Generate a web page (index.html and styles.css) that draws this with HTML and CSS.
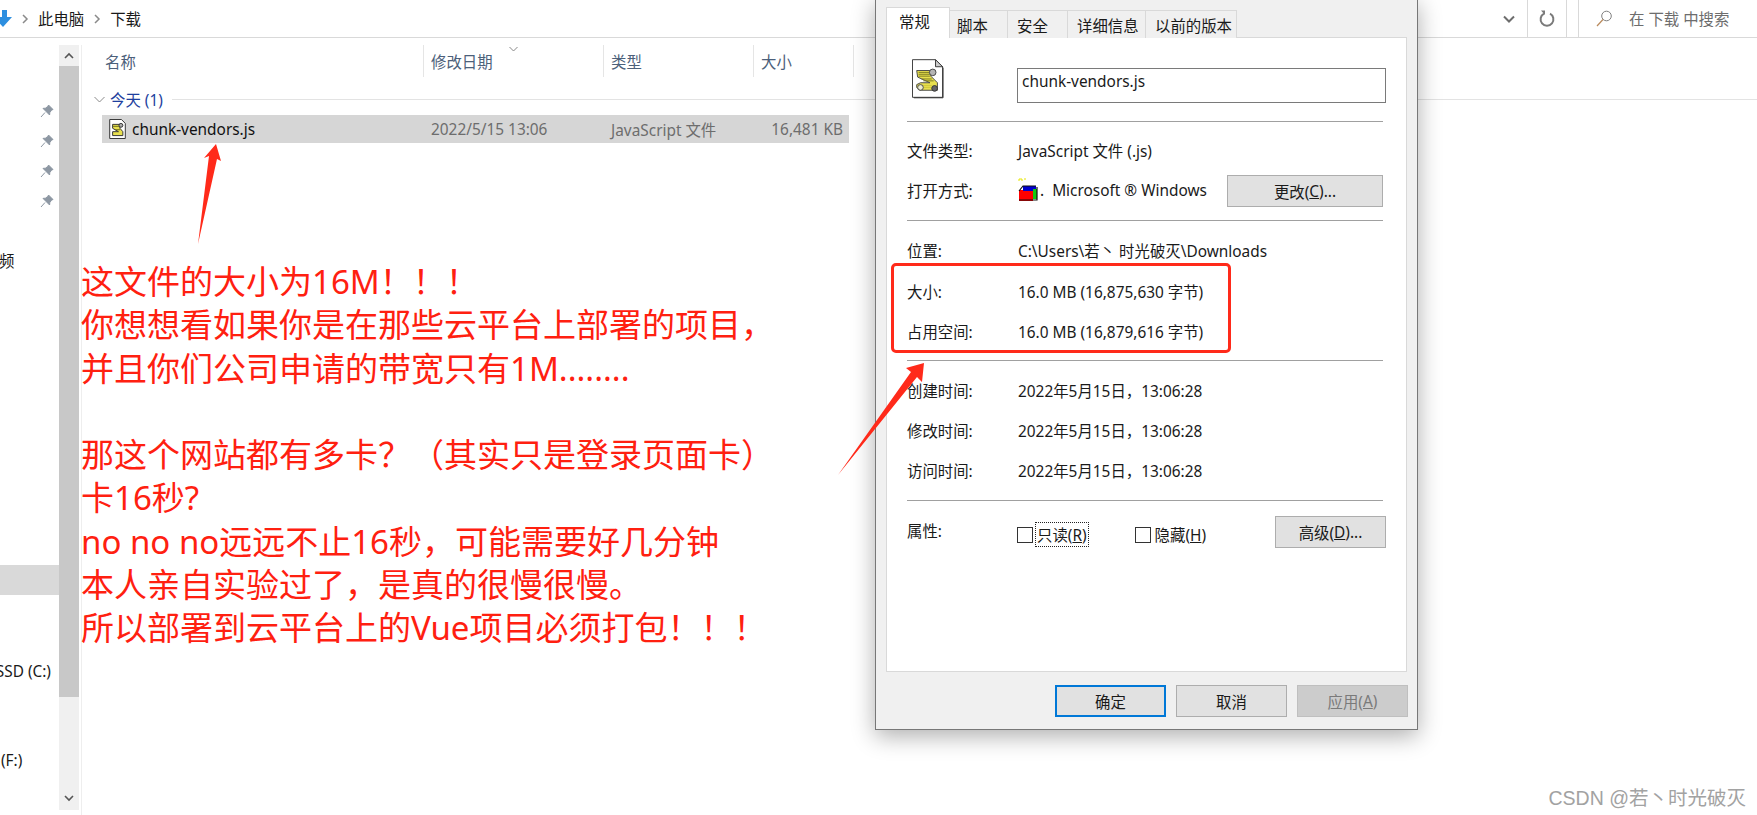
FILE: index.html
```html
<!DOCTYPE html>
<html lang="zh">
<head>
  <meta charset="UTF-8">
  <title>chunk-vendors.js 属性</title>
  <link rel="stylesheet" href="styles.css">
</head>
<body>
<div class="shot">

  <div class="explorer">
    <div class="addressbar">
      <div class="crumbs">
        <svg class="down-icon" width="12" height="20" viewBox="0 0 12 20"><path d="M-6 8 H2 V1 H7 V8 H12 L3 18 Z" fill="#2d8fe0"/></svg>
        <svg class="crumb-sep" width="8" height="10" viewBox="0 0 8 10"><path d="M2 1 L6 5 L2 9" fill="none" stroke="#8a8a8a" stroke-width="1.5"/></svg>
        <span>此电脑</span>
        <svg class="crumb-sep" width="8" height="10" viewBox="0 0 8 10"><path d="M2 1 L6 5 L2 9" fill="none" stroke="#8a8a8a" stroke-width="1.5"/></svg>
        <span>下载</span>
      </div>
      <div class="addr-tools">
        <svg class="addr-chevron" width="12" height="8" viewBox="0 0 12 8"><path d="M1 1.5 L6 6.5 L11 1.5" fill="none" stroke="#6d6d6d" stroke-width="2"/></svg>
        <div class="addr-refresh">
          <svg width="16" height="17" viewBox="0 0 16 17"><path d="M5 3.6 A6.4 6.4 0 1 0 11 3.6" fill="none" stroke="#7a7a7a" stroke-width="2"/><path d="M4 .5 L8 .5 L8 5 Z" fill="#7a7a7a" transform="translate(-2 0)"/></svg>
        </div>
      </div>
      <div class="searchbox">
        <svg width="17" height="17" viewBox="0 0 17 17"><circle cx="10.5" cy="6" r="4.8" fill="none" stroke="#7f7f7f"/><path d="M7 9.5 L1 16" stroke="#b98a5c" stroke-width="1.2"/></svg>
        <span>在 下载 中搜索</span>
      </div>
    </div>

    <div class="main">
      <div class="sidebar">
        <ul class="nav">
          <li class="nav-pin"><svg width="14" height="14" viewBox="0 0 14 14"><path d="M8.5 1 L13 5.5 L11.6 6 L9.8 8.6 L9.6 11 L3 4.4 L5.4 4.2 L8 2.4 Z M5 8.5 L1 13" fill="#8d97a3" stroke="#8d97a3"/></svg></li>
          <li class="nav-pin"><svg width="14" height="14" viewBox="0 0 14 14"><path d="M8.5 1 L13 5.5 L11.6 6 L9.8 8.6 L9.6 11 L3 4.4 L5.4 4.2 L8 2.4 Z M5 8.5 L1 13" fill="#8d97a3" stroke="#8d97a3"/></svg></li>
          <li class="nav-pin"><svg width="14" height="14" viewBox="0 0 14 14"><path d="M8.5 1 L13 5.5 L11.6 6 L9.8 8.6 L9.6 11 L3 4.4 L5.4 4.2 L8 2.4 Z M5 8.5 L1 13" fill="#8d97a3" stroke="#8d97a3"/></svg></li>
          <li class="nav-pin"><svg width="14" height="14" viewBox="0 0 14 14"><path d="M8.5 1 L13 5.5 L11.6 6 L9.8 8.6 L9.6 11 L3 4.4 L5.4 4.2 L8 2.4 Z M5 8.5 L1 13" fill="#8d97a3" stroke="#8d97a3"/></svg></li>
          <li class="nav-video"><span>频</span></li>
          <li class="nav-current"></li>
          <li class="nav-ssd"><span>SSD (C:)</span></li>
          <li class="nav-f"><span>(F:)</span></li>
        </ul>
      </div>
      <div class="scrollbar">
        <div class="scroll-btn"><svg width="10" height="7" viewBox="0 0 10 7"><path d="M1 6 L5 2 L9 6" fill="none" stroke="#555" stroke-width="1.6"/></svg></div>
        <div class="scroll-thumb"></div>
        <div class="scroll-rest"><svg width="10" height="7" viewBox="0 0 10 7"><path d="M1 1 L5 5 L9 1" fill="none" stroke="#555" stroke-width="1.6"/></svg></div>
      </div>
      <div class="files">
        <div class="file-head">
          <div class="col col-name">名称</div>
          <div class="col col-date">修改日期
            <svg class="sort-mark" width="9" height="6" viewBox="0 0 9 6"><path d="M.5 1 L4.5 5 L8.5 1" fill="none" stroke="#888"/></svg>
          </div>
          <div class="col col-type">类型</div>
          <div class="col col-size">大小</div>
        </div>
        <div class="group">
          <svg width="11" height="7" viewBox="0 0 11 7"><path d="M.5 1 L5.5 6 L10.5 1" fill="none" stroke="#8a8a8a"/></svg>
          <span>今天 (1)</span>
          <div class="group-line"></div>
        </div>
        <div class="file-row">
          <svg class="js-small" width="17" height="20" viewBox="0 0 34 41">
            <path d="M1 1 H25 L33 9 V40 H1 Z" fill="#fff" stroke="#333" stroke-width="2"/>
            <path d="M7 11 H22 V19 L28 26 V34 H7 V26 H19 L7 19 Z" fill="#e8e04e" stroke="#333" stroke-width="2"/>
            <path d="M8 15 H20 M12 22 H22" stroke="#6b6a1c" stroke-width="2"/>
            <circle cx="24" cy="13" r="4" fill="#aaa" stroke="#333" stroke-width="2"/>
          </svg>
          <span class="file-name">chunk-vendors.js</span>
          <span class="file-date">2022/5/15 13:06</span>
          <span class="file-type">JavaScript 文件</span>
          <span class="file-size">16,481 KB</span>
        </div>
      </div>
    </div>
  </div>

  <div class="dialog">
    <div class="tabs">
      <div class="tab tab-active">常规</div>
      <div class="tab tab-script">脚本</div>
      <div class="tab tab-safe">安全</div>
      <div class="tab tab-detail">详细信息</div>
      <div class="tab tab-prev">以前的版本</div>
    </div>
    <div class="panel">
      <div class="name-row">
        <svg class="js-big" width="34" height="41" viewBox="0 0 34 41">
          <path d="M.5 .5 H25 L32.5 8 V40.5 H.5 Z" fill="#fff" stroke="#333"/>
          <path d="M25 .5 V8 H32.5 Z" fill="#ccc" stroke="#333"/>
          <path d="M33 9 V41 H2" fill="none" stroke="#333" stroke-width="1"/>
          <path d="M5 12 H20 V18 L27 25 V33 H8 L5 30 V27 L9 25 H19 L6 19 Z" fill="#e8e04e" stroke="#444"/>
          <path d="M7 14 H19 M7 16 H19 M7 18 H19 M10 21 H21 M12 23 H23" stroke="#77761f"/>
          <path d="M10 28 H21 M10 30 H21" stroke="#cfc83a"/>
          <circle cx="22" cy="14" r="3.5" fill="#b5b5b5" stroke="#444"/>
          <circle cx="9" cy="30" r="3" fill="#eeeed0" stroke="#444"/>
          <circle cx="24" cy="31" r="3" fill="#666" stroke="#333"/>
        </svg>
        <div class="name-input">chunk-vendors.js</div>
      </div>
      <hr class="rule rule-name">
      <div class="info info-type">
        <span class="label">文件类型:</span><span>JavaScript 文件 (.js)</span>
      </div>
      <div class="info info-open">
        <span class="label">打开方式:</span>
        <svg class="app-icon" width="21" height="23" viewBox="0 0 21 23">
          <path d="M1 3 V1 H4 V3 M6 1 H8" stroke="#e6e600" fill="none"/>
          <rect x="1" y="12" width="14" height="11" fill="#f00"/>
          <rect x="5" y="8" width="13" height="5" fill="#00c"/>
          <rect x="15" y="11" width="4" height="10" fill="#1c1"/>
          <path d="M1 13 L5 8 H18 M19 9 V22 H1" fill="none" stroke="#111" stroke-width="1.2"/>
        </svg>
        <span class="app-dot">.</span>
        <span class="app-name">Microsoft ® Windows</span>
        <div class="btn btn-change">更改(<u>C</u>)...</div>
      </div>
      <hr class="rule rule-open">
      <div class="info"><span class="label">位置:</span><span>C:\Users\若丶 时光破灭\Downloads</span></div>
      <div class="info info-gap"><span class="label">大小:</span><span>16.0 MB (16,875,630 字节)</span></div>
      <div class="info"><span class="label">占用空间:</span><span>16.0 MB (16,879,616 字节)</span></div>
      <hr class="rule rule-size">
      <div class="info"><span class="label">创建时间:</span><span>2022年5月15日，13:06:28</span></div>
      <div class="info"><span class="label">修改时间:</span><span>2022年5月15日，13:06:28</span></div>
      <div class="info"><span class="label">访问时间:</span><span>2022年5月15日，13:06:28</span></div>
      <hr class="rule rule-time">
      <div class="attrs">
        <span class="label attr-label">属性:</span>
        <span class="check"></span><span class="check-text focused">只读(<u>R</u>)</span>
        <span class="check check-2"></span><span class="check-text">隐藏(<u>H</u>)</span>
        <div class="btn btn-adv">高级(<u>D</u>)...</div>
      </div>
    </div>
    <div class="dialog-foot">
      <div class="btn btn-foot btn-ok">确定</div>
      <div class="btn btn-foot">取消</div>
      <div class="btn btn-foot btn-off">应用(<u>A</u>)</div>
    </div>
  </div>

  <div class="redbox"></div>
  <svg class="arrows" width="1757" height="815" viewBox="0 0 1757 815">
    <path d="M198 244 L209 156 L204 158 L216 144 L221 161 L217 159 Z" fill="#ff2a1a"/>
    <path d="M838 475 L911 372 L906 368 L924 363 L922 382 L917 377 Z" fill="#ff2a1a"/>
  </svg>

  <div class="note">
    <div>这文件的大小为16M！！！</div>
    <div>你想想看如果你是在那些云平台上部署的项目，</div>
    <div>并且你们公司申请的带宽只有1M........</div>
    <div>&nbsp;</div>
    <div>那这个网站都有多卡？（其实只是登录页面卡）</div>
    <div>卡16秒?</div>
    <div>no no no远远不止16秒，可能需要好几分钟</div>
    <div>本人亲自实验过了，是真的很慢很慢。</div>
    <div>所以部署到云平台上的Vue项目必须打包！！！</div>
  </div>

  <div class="watermark">CSDN @若丶时光破灭</div>
</div>
</body>
</html>
```

FILE: styles.css
```css
* {
  padding: 0;
  margin: 0;
  box-sizing: border-box;
  list-style: none;
}

body {
  background: #fff;
  font-family: "Noto Sans", "Noto Sans CJK SC", sans-serif;
  font-size: 15.4px;
  color: #1a1a1a;
  overflow: hidden;
}

.shot {
  width: 1757px;
  height: 815px;
  position: relative;
  overflow: hidden;
}

/* explorer window */
.addressbar {
  height: 38px;
  border-bottom: 1px solid #d9d9d9;
  display: flex;
  align-items: center;
}

.crumbs {
  display: flex;
  align-items: center;
  flex: 1;
}

.down-icon {
  margin-right: 9px;
}

.crumb-sep {
  margin-right: 9px;
}

.crumbs span {
  margin-right: 9px;
}

.addr-tools {
  width: 66px;
  height: 37px;
  display: flex;
  align-items: center;
  border-right: 1px solid #d9d9d9;
  margin-right: 11px;
}

.addr-chevron {
  margin-left: 2px;
  margin-right: 12px;
}

.addr-refresh {
  height: 37px;
  flex: 1;
  border-left: 1px solid #d9d9d9;
  display: flex;
  align-items: center;
  justify-content: center;
}

.searchbox {
  width: 179px;
  height: 37px;
  border-left: 1px solid #d9d9d9;
  display: flex;
  align-items: center;
  padding-left: 17px;
  gap: 16px;
  color: #6d6d6d;
  white-space: nowrap;
  overflow: hidden;
}

.main {
  display: flex;
  height: 777px;
}

.sidebar {
  width: 59px;
}

.nav li {
  height: 30px;
  display: flex;
  align-items: center;
  justify-content: flex-end;
  white-space: nowrap;
}

.nav-pin {
  padding-right: 5px;
}

.nav-pin:first-child {
  margin-top: 58px;
}

.nav-video {
  margin-top: 29px;
  justify-content: flex-start !important;
}

.nav-video span {
  margin-left: -1px;
}

.nav-current {
  margin-top: 290px;
  background: #d9d9d9;
}

.nav-ssd {
  margin-top: 61px;
  padding-right: 8px;
  overflow: hidden;
}

.nav-f {
  margin-top: 59px;
  justify-content: flex-start !important;
  padding-left: 1px;
}

.scrollbar {
  width: 20px;
  margin-top: 7px;
  height: 765px;
  background: #f0f0f0;
  display: flex;
  flex-direction: column;
}

.scroll-btn {
  height: 21px;
  display: flex;
  align-items: center;
  justify-content: center;
}

.scroll-thumb {
  height: 631px;
  background: #c8c8c8;
}

.scroll-rest {
  flex: 1;
  display: flex;
  align-items: flex-end;
  justify-content: center;
  padding-bottom: 8px;
}

.files {
  flex: 1;
  margin-left: 2px;
  border-left: 1px solid #eee;
  height: 772px;
  margin-top: 7px;
  position: relative;
}

.file-head {
  display: flex;
  height: 32px;
  padding-left: 16px;
  color: #4c607a;
}

.col {
  height: 32px;
  display: flex;
  align-items: center;
  border-right: 1px solid #e5e5e5;
  padding-left: 7px;
  position: relative;
}

.col-name {
  width: 326px;
}

.col-date {
  width: 180px;
}

.col-type {
  width: 150px;
}

.col-size {
  width: 100px;
}

.sort-mark {
  position: absolute;
  left: 85px;
  top: 1px;
}

.group {
  display: flex;
  align-items: center;
  height: 20px;
  margin-top: 12px;
  padding-left: 12px;
  color: #1e3f9e;
}

.group span {
  margin-left: 5px;
}

.group-line {
  flex: 1;
  height: 1px;
  background: #e3e3e3;
  margin-left: 9px;
}

.file-row {
  display: flex;
  align-items: center;
  height: 28px;
  width: 747px;
  margin-left: 20px;
  margin-top: 6px;
  background: #d6d6d6;
  position: relative;
  color: #6d6d6d;
}

.js-small {
  margin-left: 7px;
  margin-right: 6px;
}

.file-name {
  color: #111;
  width: 299px;
}

.file-date {
  width: 180px;
}

.file-type {
  width: 143px;
}

.file-size {
  width: 89px;
  text-align: right;
  white-space: nowrap;
}

/* properties dialog */
.dialog {
  position: absolute;
  left: 875px;
  top: -2px;
  width: 543px;
  height: 732px;
  background: #f0f0f0;
  border: 1px solid #777;
  box-shadow: 0 6px 22px rgba(0, 0, 0, 0.32);
  padding: 8px 10px 0 10px;
}

.tabs {
  display: flex;
  align-items: flex-end;
  height: 31px;
  position: relative;
  z-index: 1;
}

.tab {
  height: 28px;
  display: flex;
  align-items: center;
  border: 1px solid #d9d9d9;
  border-bottom: 0;
  border-left: 0;
  background: #f0f0f0;
  padding-top: 2px;
  padding-left: 9px;
  white-space: nowrap;
}

.tab-active {
  height: 31px;
  width: 64px;
  background: #fff;
  border-left: 1px solid #d9d9d9;
  padding: 0 0 4px 12px;
}

.tab-script {
  width: 58px;
  padding-left: 7px;
}

.tab-safe {
  width: 60px;
}

.tab-detail {
  width: 78px;
}

.tab-prev {
  width: 91px;
}

.panel {
  width: 521px;
  height: 635px;
  background: #fff;
  border: 1px solid #d9d9d9;
  margin-top: -1px;
  padding: 0 20px;
}

.name-row {
  display: flex;
  align-items: flex-start;
  height: 83px;
  padding-top: 20px;
  margin-left: 5px;
}

.name-input {
  width: 369px;
  height: 35px;
  border: 1px solid #7a7a7a;
  margin-left: 73px;
  margin-top: 10px;
  padding-left: 4px;
  line-height: 26px;
  flex: none;
}

.rule {
  border: 0;
  border-top: 1px solid #a0a0a0;
  width: 476px;
}

.info {
  display: flex;
  align-items: center;
  height: 40px;
  white-space: nowrap;
}

.label {
  width: 111px;
  flex: none;
}

.info-type {
  margin-top: 8px;
}

.info-open {
  position: relative;
}

.app-icon {
  flex: none;
  margin-top: -2px;
}

.app-dot {
  margin: 0 8px 0 1px;
}

.btn {
  background: #e1e1e1;
  border: 1px solid #adadad;
  display: flex;
  align-items: center;
  justify-content: center;
  color: #1a1a1a;
  white-space: nowrap;
}

.btn-change {
  position: absolute;
  left: 320px;
  top: 5px;
  width: 156px;
  height: 32px;
}

.rule-open {
  margin-top: 10px;
  margin-bottom: 9px;
}

.rule-name {
  margin-top: 0;
}

.info-gap {
  margin-top: 1px;
}

.rule-size {
  margin-top: 9px;
  margin-bottom: 9px;
}

.rule-time {
  margin-top: 10px;
}

.attrs {
  display: flex;
  align-items: center;
  position: relative;
  height: 37px;
  margin-top: 15px;
}

.attr-label {
  width: 110px;
  align-self: flex-start;
  margin-top: 3px;
}

.check {
  width: 16px;
  height: 16px;
  border: 1px solid #333;
  background: #fff;
  flex: none;
  margin-right: 3px;
}

.check-2 {
  margin-left: 47px;
}

.check-text {
  padding: 0 1px;
}

.focused {
  outline: 1px dotted #222;
}

.btn-adv {
  position: absolute;
  left: 368px;
  top: 0;
  width: 111px;
  height: 32px;
}

.dialog-foot {
  display: flex;
  justify-content: flex-end;
  gap: 10px;
  margin-top: 13px;
  margin-right: -1px;
}

.btn-foot {
  width: 111px;
  height: 32px;
}

.btn-ok {
  border: 2px solid #0078d7;
}

.btn-off {
  background: #cccccc;
  color: #7a7a7a;
  border-color: #bfbfbf;
}

/* red annotation on top of the screenshot */
.redbox {
  position: absolute;
  left: 891px;
  top: 263px;
  width: 340px;
  height: 90px;
  border: 3px solid #ff2a1a;
  border-radius: 5px;
}

.arrows {
  position: absolute;
  left: 0;
  top: 0;
}

.note {
  position: absolute;
  left: 81px;
  top: 260px;
  font-size: 33px;
  line-height: 43.3px;
  color: #ff2010;
  white-space: nowrap;
}

.watermark {
  position: absolute;
  right: 11px;
  top: 782px;
  font-family: "Liberation Sans", "Noto Sans CJK SC", sans-serif;
  font-size: 19.5px;
  color: #a2a2a2;
  white-space: nowrap;
}
```
